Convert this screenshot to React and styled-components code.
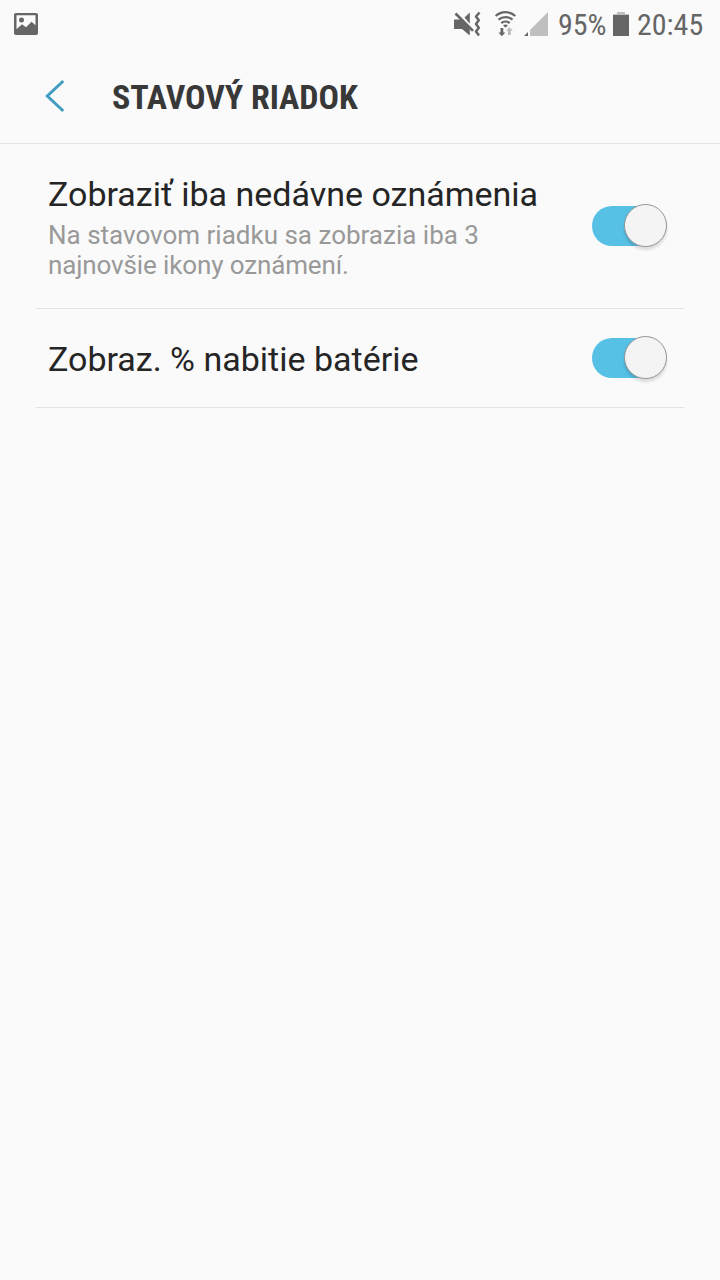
import React from "react";
import styled, { createGlobalStyle } from "styled-components";

const theme = {
  background: "#fafafa",
  statusColor: "#666666",
  titleColor: "#383838",
  textColor: "#252525",
  mutedColor: "#999999",
  lineColor: "#e3e3e3",
  accentColor: "#3f9dc1",
  switchColor: "#56c0e5",
};

const GlobalStyle = createGlobalStyle`
  * {
    box-sizing: border-box;
  }
  body {
    margin: 0;
    background: ${theme.background};
    font-family: Roboto, sans-serif;
  }
`;

const Screen = styled.div`
  width: 720px;
  height: 1280px;
  overflow: hidden;
  background: ${theme.background};
`;

const StatusBar = styled.div`
  display: flex;
  justify-content: space-between;
  height: 48px;
  padding: 0 16px 0 14px;
  color: ${theme.statusColor};
  svg {
    display: block;
    flex: none;
  }
`;

const StatusGroup = styled.div`
  display: flex;
  align-items: center;
`;

const StatusIcon = styled.span`
  margin-left: ${(props) => props.$gap || 0}px;
`;

const StatusText = styled.span`
  width: ${(props) => props.$width}px;
  margin-left: ${(props) => props.$gap}px;
  padding-top: 1px;
  font-family: "Roboto Condensed", Roboto, sans-serif;
  font-stretch: 75%;
  font-size: 30px;
  line-height: 48px;
  white-space: nowrap;
`;

const Header = styled.header`
  display: flex;
  align-items: center;
  height: 96px;
  padding-left: 44px;
  border-bottom: 1px solid ${theme.lineColor};
`;

const BackButton = styled.button`
  width: 68px;
  height: 48px;
  padding: 0;
  border: 0;
  background: none;
  svg {
    display: block;
  }
`;

const Title = styled.h1`
  margin: 0;
  padding-top: 2px;
  font-family: "Roboto Condensed", Roboto, sans-serif;
  font-stretch: 75%;
  font-size: 34px;
  font-weight: 700;
  line-height: 40px;
  letter-spacing: -0.05px;
  color: ${theme.titleColor};
  white-space: nowrap;
`;

const List = styled.main`
  padding: 0 36px;
`;

const Row = styled.div`
  display: flex;
  align-items: center;
  justify-content: space-between;
  height: ${(props) => props.$height}px;
  padding: 0 17px 0 12px;
  border-bottom: 1px solid ${theme.lineColor};
`;

const Label = styled.div`
  font-size: 34px;
  line-height: 40px;
  padding-top: 2px;
  color: ${theme.textColor};
  white-space: nowrap;
`;

const Summary = styled.div`
  font-size: 26px;
  line-height: 30px;
  margin-top: 6px;
  padding-bottom: 1px;
  color: ${theme.mutedColor};
`;

const SummaryLine = styled.span`
  display: block;
  letter-spacing: ${(props) => props.$spacing || 0}px;
  white-space: nowrap;
`;

const Track = styled.div`
  display: flex;
  align-items: center;
  justify-content: flex-end;
  width: 75px;
  height: 40px;
  border-radius: 20px;
  background: linear-gradient(
    to right,
    ${theme.switchColor} 54px,
    transparent 54px
  );
`;

const Thumb = styled.div`
  flex: none;
  width: 43px;
  height: 43px;
  margin-bottom: 1px;
  border: 1px solid #949494;
  border-radius: 50%;
  background: #f4f4f4;
  box-shadow: 0 3px 3px rgba(0, 0, 0, 0.13);
`;

const Switch = () => (
  <Track role="switch" aria-checked="true">
    <Thumb />
  </Track>
);

const PictureIcon = () => (
  <svg width="24" height="24" viewBox="0 0 24 24">
    <path
      fill="currentColor"
      fillRule="evenodd"
      d="M2 1h20a2 2 0 0 1 2 2v18a2 2 0 0 1-2 2H2a2 2 0 0 1-2-2V3a2 2 0 0 1 2-2zM2.500 3.300v14l5.500-5 4 3 5.500-5.500 4 3.500V3.300zM7.500 5.500a2.500 2.500 0 1 1 0 5 2.500 2.500 0 0 1 0-5z"
    />
  </svg>
);

const MuteIcon = () => (
  <svg width="28" height="28" viewBox="0 0 28 28">
    <path fill="currentColor" d="M11.500 7.500l5.300-5v11.300z" />
    <path fill="currentColor" d="M1 9.500h6.500l9.300 9v7L9 19H1z" />
    <path
      d="M2.500 3.500l17.500 17.300"
      fill="none"
      stroke="currentColor"
      strokeWidth="2.600"
    />
    <path
      d="M26.500 2.500l-3.500 4 2.800 3.800-2.800 3.700 2.800 3.700-2.800 3.700 3 4"
      fill="none"
      stroke="currentColor"
      strokeWidth="2.500"
      strokeLinejoin="round"
    />
  </svg>
);

const WifiIcon = () => (
  <svg width="24" height="28" viewBox="0 0 24 28">
    <g fill="none" stroke="currentColor" strokeWidth="2.300">
      <path d="M1.700 6a14.500 14.500 0 0 1 19.600 0" />
      <path d="M4.500 9.700a10.500 10.500 0 0 1 14 0" />
      <path d="M7.300 13.200a6.500 6.500 0 0 1 8.400 0" />
    </g>
    <path d="M9 15.200q2.500-1.500 5 0l-2.500 2.600z" fill="currentColor" />
    <path d="M6.500 18h2.800v4.500h2L7.900 26.300l-3.400-3.800h2z" fill="currentColor" />
    <path d="M14 25h2.800v-4.200h2L15.400 17 12 20.800h2z" fill="#bdbdbd" />
  </svg>
);

const SignalIcon = () => (
  <svg width="24" height="26" viewBox="0 0 24 26">
    <path d="M24 1v24H6V19z" fill="#bfbfbf" />
    <path d="M0 25l4-4v4z" fill="currentColor" />
  </svg>
);

const BatteryIcon = () => (
  <svg width="16" height="26" viewBox="0 0 16 26">
    <path d="M4 1h8v2h4v3H0V3h4z" fill="#bfbfbf" />
    <path d="M0 4h16v21H0z" fill="currentColor" />
  </svg>
);

const App = () => {
  return (
    <Screen>
      <GlobalStyle />
      <StatusBar>
        <StatusGroup>
          <PictureIcon />
        </StatusGroup>
        <StatusGroup>
          <StatusIcon>
            <MuteIcon />
          </StatusIcon>
          <StatusIcon $gap={13}>
            <WifiIcon />
          </StatusIcon>
          <StatusIcon $gap={6}>
            <SignalIcon />
          </StatusIcon>
          <StatusText $width={48} $gap={10}>
            95%
          </StatusText>
          <StatusIcon $gap={7}>
            <BatteryIcon />
          </StatusIcon>
          <StatusText $width={67} $gap={8}>
            20:45
          </StatusText>
        </StatusGroup>
      </StatusBar>
      <Header>
        <BackButton aria-label="Späť">
          <svg width="24" height="48" viewBox="0 0 24 48">
            <path
              d="M19.300 9L3.300 24l16 15"
              fill="none"
              stroke={theme.accentColor}
              strokeWidth="3"
            />
          </svg>
        </BackButton>
        <Title>STAVOVÝ RIADOK</Title>
      </Header>
      <List>
        <Row $height={165}>
          <div>
            <Label>Zobraziť iba nedávne oznámenia</Label>
            <Summary>
              <SummaryLine>Na stavovom riadku sa zobrazia iba 3</SummaryLine>
              <SummaryLine $spacing={-0.13}>
                najnovšie ikony oznámení.
              </SummaryLine>
            </Summary>
          </div>
          <Switch />
        </Row>
        <Row $height={99}>
          <Label>Zobraz. % nabitie batérie</Label>
          <Switch />
        </Row>
      </List>
    </Screen>
  );
};

export default App;
